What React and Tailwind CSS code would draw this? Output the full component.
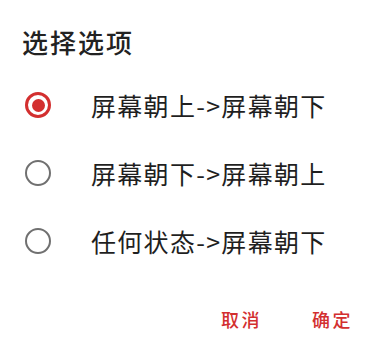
import { useState } from "react";

const options = ["屏幕朝上->屏幕朝下", "屏幕朝下->屏幕朝上", "任何状态->屏幕朝下"];

const font = { fontFamily: '"Noto Sans CJK SC", "Noto Sans", sans-serif' };

const Radio = ({ checked }) =>
  checked ? (
    <span className="flex items-center justify-center w-[26px] h-[26px] rounded-full border-[3px] border-[#d32f2f]">
      <span className="w-[13px] h-[13px] rounded-full bg-[#d32f2f]" />
    </span>
  ) : (
    <span className="w-[26px] h-[26px] rounded-full border-[2.5px] border-[#707070]" />
  );

export default function App() {
  const [selected, setSelected] = useState(0);

  return (
    <div className="w-[366px] h-[355px] bg-white flex flex-col" style={font}>
      <h2 className="pl-[22px] pt-[24px] text-[26px] leading-[36px] font-medium tracking-[2px] text-[#222]">
        选择选项
      </h2>

      <div className="mt-[11px] flex flex-col">
        {options.map((opt, idx) => (
          <div
            key={idx}
            className="flex items-center h-[68px] pl-[25px] cursor-pointer"
            onClick={() => setSelected(idx)}
          >
            <Radio checked={selected === idx} />
            <span className="ml-[40px] text-[25px] leading-none tracking-[1.3px] text-[#1f1f1f]">{opt}</span>
          </div>
        ))}
      </div>

      <div className="flex justify-end gap-[50px] pr-[13px] mt-[35px]">
        <button className="text-[18px] leading-none font-medium tracking-[2.5px] text-[#d32f2f]">取消</button>
        <button className="text-[18px] leading-none font-medium tracking-[2.5px] text-[#d32f2f]">确定</button>
      </div>
    </div>
  );
}
